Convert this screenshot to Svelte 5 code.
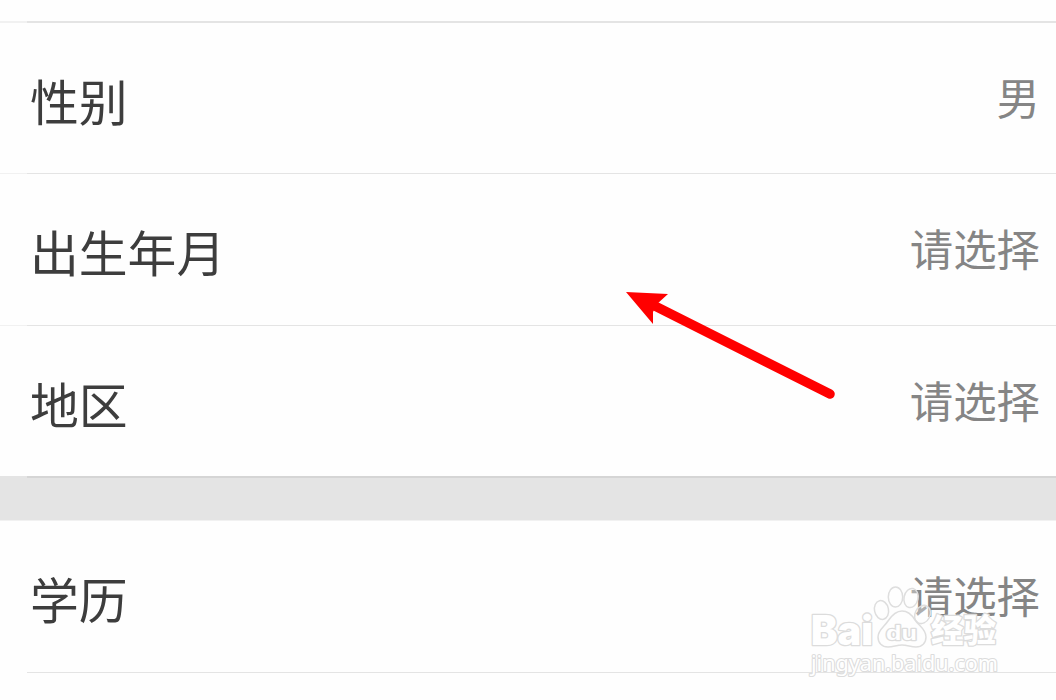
<script>
	let basics = [
		{name: "性别", value: "男"},
		{name: "出生年月", value: "请选择"},
		{name: "地区", value: "请选择"},
	]

	let education = [
		{name: "学历", value: "请选择"},
	]
</script>

<div class="page">
	<div class="previous"></div>
	<div class="group">
		{#each basics as item}
		<div class="row" class:short={item.name == "性别"}>
			<span class="label">{item.name}</span>
			<span class="value">{item.value}</span>
		</div>
		{/each}
	</div>
	<div class="gap"></div>
	<div class="group">
		{#each education as item}
		<div class="row">
			<span class="label">{item.name}</span>
			<span class="value">{item.value}</span>
		</div>
		{/each}
	</div>

	<svg class="overlay" width="1056" height="700" viewBox="0 0 1056 700">
		<path d="M652 304.5 L830 394" stroke="#f00" stroke-width="9.5" stroke-linecap="round" />
		<path d="M626 292 L668 294 L657 304 L653 312 L653 324 Z" fill="#f00" />

		<g class="mark">
			<ellipse cx="881.5" cy="610" rx="7" ry="9.5" transform="rotate(-12 881.5 610)" />
			<ellipse cx="895.5" cy="597" rx="7.2" ry="10" />
			<ellipse cx="911" cy="598" rx="7" ry="9.7" transform="rotate(12 911 598)" />
			<ellipse cx="922.5" cy="614.5" rx="7.5" ry="9.5" transform="rotate(28 922.5 614.5)" />
			<path d="M902 611 C908 611 912 615 915 620 C919 626 926 629 926 637 C926 643 922 647 916 647 C911 647 907 645 902 645 C897 645 893 647 888 647 C882 647 878 643 878 637 C878 630 884 627 888 621 C892 615 896 611 902 611 Z" />
		</g>
		<g class="words">
			<text class="brand" x="811" y="644.5" textLength="62" lengthAdjust="spacingAndGlyphs">Bai</text>
			<text class="du" x="886" y="640" textLength="31" lengthAdjust="spacingAndGlyphs">du</text>
			<text class="cn" x="931" y="642" textLength="65" lengthAdjust="spacingAndGlyphs">经验</text>
			<text class="site" x="811" y="671" textLength="187" lengthAdjust="spacingAndGlyphs">jingyan.baidu.com</text>
		</g>
	</svg>
</div>

<style>
	:global(body) {
		background: #fefefe;
	}

	.page {
		position: relative;
		height: 700px;
		overflow: hidden;
		font-family: "Noto Sans CJK SC", sans-serif;
	}

	.previous {
		box-sizing: border-box;
		height: 23px;
		background: linear-gradient(to right, #f1f1f1 27px, #e4e4e4 27px) 0 100% / 100% 2px no-repeat;
	}

	.row {
		box-sizing: border-box;
		height: 152px;
		display: flex;
		justify-content: space-between;
		align-items: flex-start;
		padding: 41px 16px 0 30px;
		background: linear-gradient(to right, #f1f1f1 27px, #e4e4e4 27px) 0 100% / 100% 1px no-repeat;
	}

	.row.short {
		height: 151px;
	}

	.group .row:last-child {
		background: linear-gradient(to right, #fefefe 27px, #e4e4e4 27px) 0 100% / 100% 1px no-repeat;
	}

	.group:nth-child(2) .row:last-child {
		height: 150px;
		background: none;
	}

	.gap {
		box-sizing: border-box;
		height: 45px;
		background: linear-gradient(to right, #e4e4e4 27px, #d5d5d5 27px) 0 0 / 100% 2px no-repeat,
			linear-gradient(#e4e4e4, #e4e4e4) 0 0 / 100% 44px no-repeat,
			#f1f1f1;
	}

	.label {
		font-size: 48.8px;
		line-height: 72px;
		color: #3d3d3d;
	}

	.value {
		font-size: 43.4px;
		line-height: 64px;
		color: #858585;
	}

	.overlay {
		position: absolute;
		left: 0;
		top: 0;
	}

	.mark {
		fill: rgba(255, 255, 255, 0.35);
		stroke: #dedede;
		stroke-width: 1.5;
	}

	/* white letters with a thin grey outline behind the fill */
	.words {
		fill: #fff;
		stroke: #dcdcdc;
		stroke-width: 2.6;
		stroke-linejoin: round;
		paint-order: stroke;
		font-family: "Liberation Sans", "Noto Sans CJK SC", sans-serif;
	}

	.brand {
		font-family: Inter, "Liberation Sans", sans-serif;
		font-size: 41px;
		font-weight: 900;
	}

	.du {
		font-size: 21px;
		font-weight: bold;
	}

	.cn {
		font-family: "Noto Sans CJK SC", sans-serif;
		font-size: 32px;
		font-weight: 900;
	}

	.site {
		font-family: "Noto Sans", sans-serif;
		font-size: 22px;
		stroke-width: 2.2;
	}
</style>
